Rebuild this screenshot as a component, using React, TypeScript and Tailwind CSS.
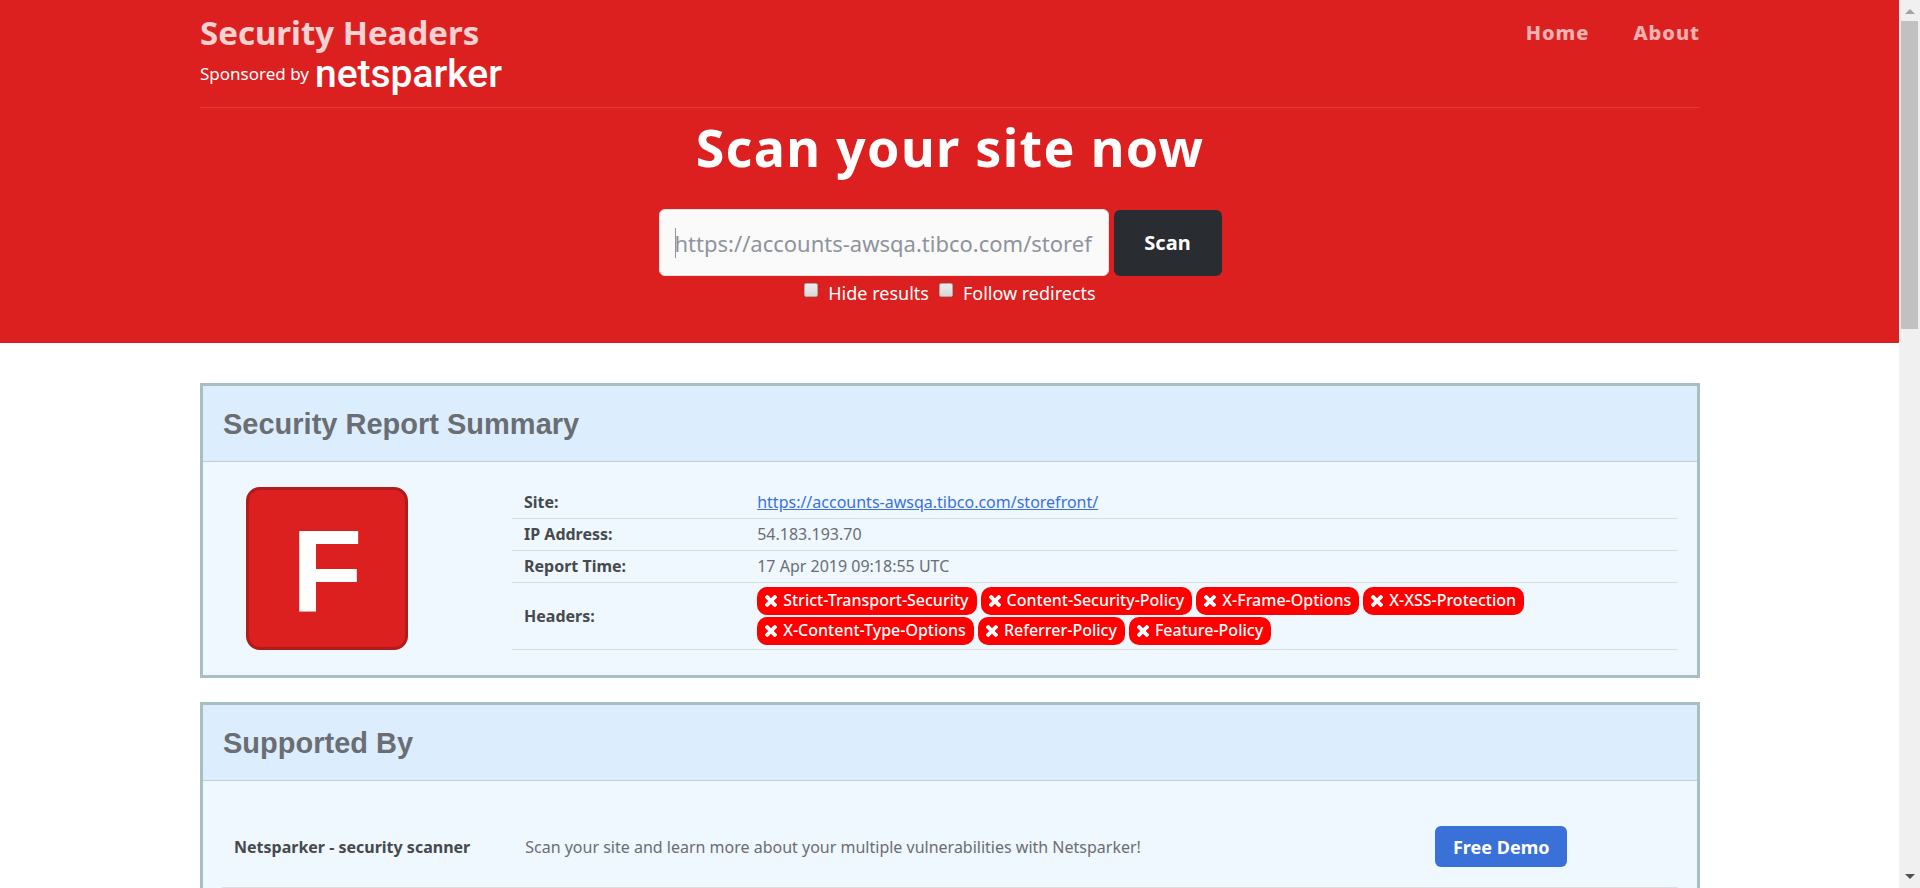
import type { ReactNode } from "react";

const missingHeaders = [
  "Strict-Transport-Security",
  "Content-Security-Policy",
  "X-Frame-Options",
  "X-XSS-Protection",
  "X-Content-Type-Options",
  "Referrer-Policy",
  "Feature-Policy",
];

function CrossIcon() {
  return (
    <svg viewBox="0 0 12 12" className="size-3 shrink-0" aria-hidden="true">
      <path
        d="M2.2 2.2 9.8 9.8M9.8 2.2 2.2 9.8"
        stroke="currentColor"
        strokeWidth="3.8"
        strokeLinecap="square"
        fill="none"
      />
    </svg>
  );
}

function Badge({ label }: { label: string }) {
  return (
    <li className="flex h-7 items-center gap-1.5 rounded-[10px] bg-[#ff0000] px-2 pb-px font-medium text-white">
      <CrossIcon />
      {label}
    </li>
  );
}

function Card({ title, children }: { title: string; children: ReactNode }) {
  return (
    <section className="border-3 border-[#a8bfc1] bg-[#eff7ff]">
      <h2 className="border-b border-[#c0cfd5] bg-[#dcedfe] px-5 pt-5 pb-[19px] font-['Liberation_Sans',Arial,sans-serif] text-[29px] leading-9 font-bold text-[#6a6e73]">
        {title}
      </h2>
      {children}
    </section>
  );
}

function SummaryRow({ label, children }: { label: string; children: ReactNode }) {
  return (
    <tr className="border-b border-[#dedede]">
      <th scope="row" className="w-1/5 px-3 py-1 text-left leading-[23px] font-bold text-[#464a4c]">
        {label}
      </th>
      <td className="px-3 py-1 leading-[23px]">{children}</td>
    </tr>
  );
}

function Option({ label }: { label: string }) {
  return (
    <label className="flex items-center gap-2.5">
      <input
        type="checkbox"
        className="mb-1.5 size-3.5 appearance-none rounded-xs border border-[#a9a9a9] bg-linear-to-b from-[#eeeeee] to-[#d8d8d8] checked:bg-[#3a71d8]"
      />
      {label}
    </label>
  );
}

function ScrollRail() {
  return (
    <div className="flex w-[21px] shrink-0 flex-col items-center justify-between bg-[#f0f0f0]" aria-hidden="true">
      <div className="flex h-full w-full flex-col items-center">
        <svg viewBox="0 0 10 5" className="mt-[9px] mb-[7px] h-[5px] w-2.5 shrink-0">
          <path d="M0 5 5 0l5 5z" fill="#a3a3a3" />
        </svg>
        <div className="h-[308px] w-[17px] bg-[#c1c1c1]" />
      </div>
      <svg viewBox="0 0 10 5" className="mb-[9px] h-[5px] w-2.5 shrink-0">
        <path d="M0 0h10L5 5z" fill="#505050" />
      </svg>
    </div>
  );
}

export default function App() {
  return (
    <div className="flex h-screen overflow-hidden bg-white font-['Noto_Sans',sans-serif] text-base text-[#6a6e73]">
      <div className="min-w-0 flex-1 overflow-hidden">
        <div className="bg-[#dc1f1f] pt-[13px] pr-4 pb-9 pl-[17px] text-white">
          <div className="mx-auto max-w-[1500px]">
            <header className="flex items-start justify-between border-b border-[#e43b3b] pb-3">
              <div>
                <a href="/" className="block text-[33px] leading-10 font-bold text-white/80">
                  Security Headers
                </a>
                <a href="/sponsor" className="flex h-[42px] items-center gap-1.5 text-[17px]">
                  Sponsored by
                  <span className="font-['Roboto',sans-serif] text-[39px] leading-[42px] font-medium">netsparker</span>
                </a>
              </div>
              <nav className="flex gap-11 pt-1.5 text-xl font-extrabold tracking-wider text-white/65">
                <a href="/">Home</a>
                <a href="/about">About</a>
              </nav>
            </header>
            <h1 className="mt-[9px] text-center text-[52px] leading-[60px] font-bold tracking-wide">
              Scan your site now
            </h1>
            <form className="mt-8" onSubmit={(e) => e.preventDefault()}>
              <div className="flex items-end justify-center gap-[5px] pr-5">
                <div className="relative">
                  <input
                    type="text"
                    aria-label="Site address"
                    placeholder="https://accounts-awsqa.tibco.com/storefront/"
                    className="block h-[67px] w-[450px] rounded-md border border-[#e3e3e3] bg-[#fafafa] px-[15px] text-[22px] text-[#33363b] placeholder:text-[#8f939c]"
                  />
                  <span className="absolute top-[19px] left-4 h-[30px] w-px bg-[#8f939c]" />
                </div>
                <button type="submit" className="h-[66px] w-27 rounded-md bg-[#292c31] text-xl font-bold">
                  Scan
                </button>
              </div>
              <div className="mt-[3px] flex justify-center gap-2.5 text-lg leading-7">
                <Option label="Hide results" />
                <Option label="Follow redirects" />
              </div>
            </form>
          </div>
        </div>

        <div className="pl-px">
          <main className="mx-auto flex max-w-[1500px] flex-col gap-6 pt-10 pb-6">
            <Card title="Security Report Summary">
              <div className="flex items-start py-[25px] pr-[19px] pl-[43px]">
                <div className="mr-[104px] flex h-[163px] w-[162px] shrink-0 items-center justify-center rounded-[14px] border-3 border-[#b01c1c] bg-[#dc1f1f] pt-1.5 font-['Liberation_Sans',Arial,sans-serif] text-[116px] leading-none font-bold text-white">
                  F
                </div>
                <table className="flex-1 table-fixed border-collapse">
                  <tbody>
                    <SummaryRow label="Site:">
                      <a href="https://accounts-awsqa.tibco.com/storefront/" className="text-[#3a71d8] underline">
                        https://accounts-awsqa.tibco.com/storefront/
                      </a>
                    </SummaryRow>
                    <SummaryRow label="IP Address:">54.183.193.70</SummaryRow>
                    <SummaryRow label="Report Time:">17 Apr 2019 09:18:55 UTC</SummaryRow>
                    <SummaryRow label="Headers:">
                      <ul className="flex flex-wrap gap-x-1 gap-y-0.5">
                        {missingHeaders.map((name) => (
                          <Badge key={name} label={name} />
                        ))}
                      </ul>
                    </SummaryRow>
                  </tbody>
                </table>
              </div>
            </Card>

            <Card title="Supported By">
              <div className="px-[19px] pt-[26px] pb-6">
                <table className="w-full table-fixed border-collapse">
                  <tbody>
                    <tr className="h-20 border-b border-[#dedede]">
                      <th scope="row" className="w-1/5 px-3 text-left font-bold text-[#464a4c]">
                        Netsparker - security scanner
                      </th>
                      <td className="px-3">
                        Scan your site and learn more about your multiple vulnerabilities with Netsparker!
                      </td>
                      <td className="w-[17.5%] px-3">
                        <a
                          href="/demo"
                          className="flex h-[41px] w-[132px] items-center justify-center rounded-md bg-[#3a71d8] text-lg font-bold text-white"
                        >
                          Free Demo
                        </a>
                      </td>
                    </tr>
                  </tbody>
                </table>
              </div>
            </Card>
          </main>
        </div>
      </div>
      <ScrollRail />
    </div>
  );
}
